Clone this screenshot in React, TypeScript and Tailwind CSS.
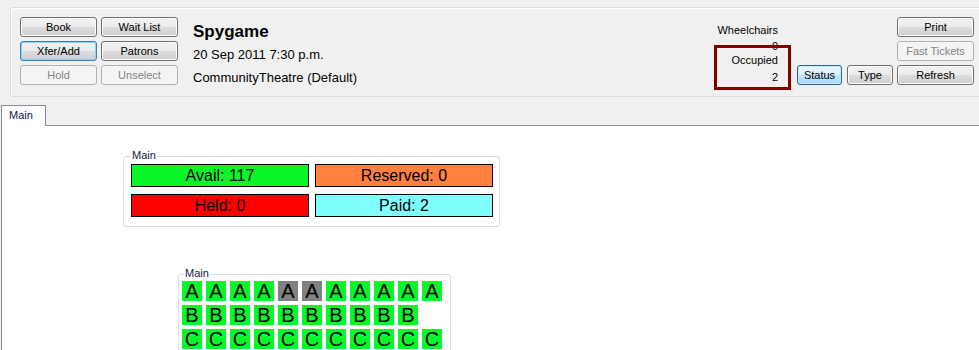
import React from 'react';

type Variant = 'normal' | 'focused' | 'disabled' | 'checked';

const variants: Record<Variant, string> = {
  normal:
    'border-[#707070] bg-[linear-gradient(to_bottom,#f2f2f2_0%,#ebebeb_50%,#dddddd_51%,#cfcfcf_100%)] shadow-[inset_0_0_0_1px_#fcfcfc] text-black',
  focused:
    'border-[#3c7fb1] bg-[linear-gradient(to_bottom,#f2f2f2_0%,#ebebeb_50%,#dddddd_51%,#cfcfcf_100%)] shadow-[inset_0_0_0_1px_#8fd3f5] text-black',
  disabled: 'border-[#adb2b5] bg-[#f4f4f4] text-[#838383]',
  checked:
    'border-[#2c628b] bg-[linear-gradient(to_bottom,#eaf6fd_0%,#d9f0fc_50%,#bee6fd_51%,#a7d9f5_100%)] shadow-[inset_0_0_0_1px_#c9e9fb] text-black',
};

function WinButton({ label, variant = 'normal', className = '' }: { label: string; variant?: Variant; className?: string }) {
  return (
    <div
      className={`h-[20px] rounded-[3px] border flex items-center justify-center text-[11px] leading-none ${variants[variant]} ${className}`}
    >
      {label}
    </div>
  );
}

const GREEN = 'bg-[#0bf52b]';

const rows: { letter: string; count: number; gray: number[] }[] = [
  { letter: 'A', count: 11, gray: [4, 5] },
  { letter: 'B', count: 10, gray: [] },
  { letter: 'C', count: 11, gray: [] },
];

export default function App() {
  return (
    <div className="w-[979px] h-[350px] overflow-hidden bg-[#f0f0f0] font-['Liberation_Sans',Arial,sans-serif] text-black flex flex-col">
      {/* header panel */}
      <div className="relative ml-[10px] mt-[7px] h-[90px] w-[975px] shrink-0 rounded-[3px] border border-[#d5dfe5] shadow-[inset_1px_1px_0_#ffffff] flex items-start pl-[9px] pr-[10px]">
        <div className="grid grid-cols-[77px_77px] gap-[4px] mt-[9px]">
          <WinButton label="Book" />
          <WinButton label="Wait List" />
          <WinButton label="Xfer/Add" variant="focused" />
          <WinButton label="Patrons" />
          <WinButton label="Hold" variant="disabled" />
          <WinButton label="Unselect" variant="disabled" />
        </div>

        <div className="ml-[15px] mt-[12px] flex flex-col">
          <div className="text-[17px] font-bold leading-[23px]">Spygame</div>
          <div className="text-[13px] leading-[23px]">20 Sep 2011 7:30 p.m.</div>
          <div className="text-[13px] leading-[23px]">CommunityTheatre (Default)</div>
        </div>

        <div className="ml-auto flex items-start">
          <div className="mt-[14px] mr-[19px] flex flex-col items-end text-[11px] leading-[16px]">
            <div>Wheelchairs</div>
            <div>0</div>
            <div className="-mt-[2px]">Occupied</div>
            <div className="mt-[1px]">2</div>
          </div>
          <WinButton label="Status" variant="checked" className="w-[45px] mt-[57px]" />
          <WinButton label="Type" className="w-[46px] mt-[57px] ml-[5px]" />
          <div className="ml-[4px] mt-[9px] w-[77px] flex flex-col gap-[4px]">
            <WinButton label="Print" />
            <WinButton label="Fast Tickets" variant="disabled" />
            <WinButton label="Refresh" />
          </div>
        </div>

        {/* highlight frame */}
        <div className="absolute left-[703px] top-[37px] w-[77px] h-[45px] border-[3px] border-[#800000]" />
      </div>

      {/* tab strip */}
      <div className="mt-[8px] flex h-[21px] shrink-0">
        <div className="ml-[1px] w-[45px] h-[21px] border border-b-0 border-[#898c95] bg-white text-[11px] leading-[13px] pl-[7px] pt-[3px] text-[#10184a]">
          Main
        </div>
        <div className="flex-1 h-[21px] border-b border-[#898c95]" />
      </div>

      {/* tab content */}
      <div className="flex-1 ml-[1px] border-l border-[#898c95] bg-white flex flex-col items-start">
        <div className="relative ml-[121px] mt-[30px] w-[377px] h-[71px] border border-[#d5dfe5] rounded-[3px] pl-[7px] pt-[7px]">
          <span className="absolute -top-[8px] left-[7px] bg-white px-[1px] text-[11px] leading-[13px] text-[#10184a]">Main</span>
          <div className="grid grid-cols-[178px_178px] gap-x-[6px] gap-y-[7px]">
            <div className={`h-[23px] border border-black ${GREEN} flex items-center justify-center text-[16px] leading-none`}>Avail: 117</div>
            <div className="h-[23px] border border-black bg-[#ff8040] flex items-center justify-center text-[16px] leading-none">Reserved: 0</div>
            <div className="h-[23px] border border-black bg-[#ff0000] flex items-center justify-center text-[16px] leading-none">Held: 0</div>
            <div className="h-[23px] border border-black bg-[#80ffff] flex items-center justify-center text-[16px] leading-none">Paid: 2</div>
          </div>
        </div>

        <div className="relative ml-[176px] mt-[47px] w-[273px] h-[100px] shrink-0 border border-[#d5dfe5] rounded-[3px] pl-[3px] pt-[6px]">
          <span className="absolute -top-[8px] left-[5px] bg-white px-[1px] text-[11px] leading-[13px] text-[#10184a]">Main</span>
          <div className="flex flex-col gap-[4px]">
            {rows.map((row) => (
              <div key={row.letter} className="flex gap-[4px]">
                {Array.from({ length: row.count }).map((_, i) => (
                  <div
                    key={i}
                    className={`w-[20px] h-[20px] flex justify-center text-[20px] leading-[20px] ${row.gray.includes(i) ? 'bg-[#808080]' : GREEN}`}
                  >
                    {row.letter}
                  </div>
                ))}
              </div>
            ))}
          </div>
        </div>
      </div>
    </div>
  );
}
